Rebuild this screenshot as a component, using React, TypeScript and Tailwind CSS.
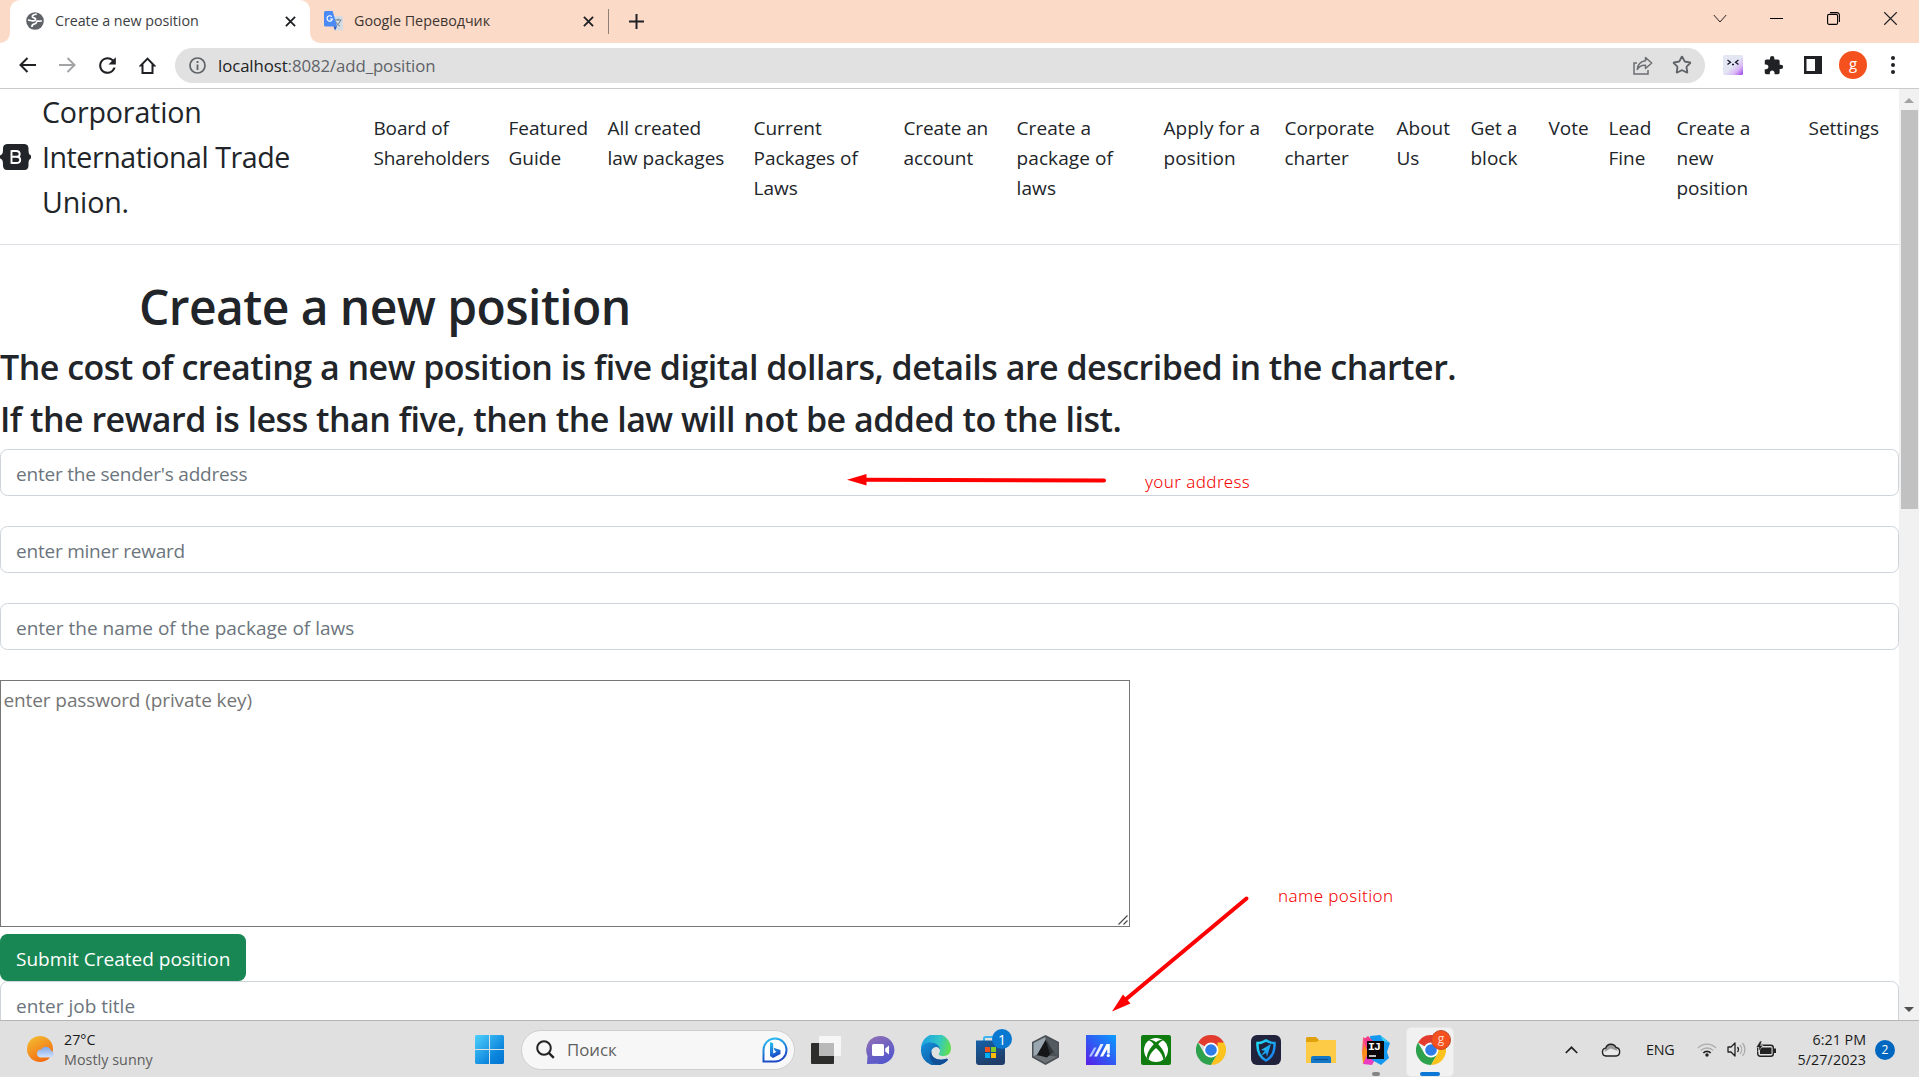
import React from "react";
import { Star } from "lucide-react";
import { MdExtension, MdRefresh } from "react-icons/md";

const NAV = [
  { w: "w-[135px] tracking-[-0.15px]", lines: ["Board of", "Shareholders"] },
  { w: "w-[99px]", lines: ["Featured", "Guide"] },
  { w: "w-[146px]", lines: ["All created", "law packages"] },
  { w: "w-[150px]", lines: ["Current", "Packages of", "Laws"] },
  { w: "w-[113px] tracking-[-0.1px]", lines: ["Create an", "account"] },
  { w: "w-[147px] tracking-[0.1px]", lines: ["Create a", "package of", "laws"] },
  { w: "w-[121px] tracking-[0.1px]", lines: ["Apply for a", "position"] },
  { w: "w-[112px]", lines: ["Corporate", "charter"] },
  { w: "w-[74px]", lines: ["About", "Us"] },
  { w: "w-[78px]", lines: ["Get a", "block"] },
  { w: "w-[60px]", lines: ["Vote"] },
  { w: "w-[68px]", lines: ["Lead", "Fine"] },
  { w: "w-[132px]", lines: ["Create a", "new", "position"] },
  { w: "w-[76px]", lines: ["Settings"] },
];

function Cross({ size = 12, sw = 2, color = "#202124" }: { size?: number; sw?: number; color?: string }) {
  return (
    <svg width={size} height={size} viewBox="0 0 12 12" stroke={color} strokeWidth={sw} fill="none">
      <path d="M1 1 11 11M11 1 1 11" />
    </svg>
  );
}

function TabStrip() {
  return (
    <div className="flex h-[43px] shrink-0 items-stretch bg-[#fcdac8] text-[14.3px] text-[#3c3530]">
      <div className="flex w-[10px] bg-white">
        <div className="w-full rounded-br-[10px] bg-[#fcdac8]" />
      </div>
      <div className="flex w-[300px] items-center rounded-t-[10px] bg-white pb-px pl-4 text-[#3c4043]">
        <svg width="18" height="18" viewBox="0 0 18 18">
          <circle cx="9" cy="9" r="8.8" fill="#5f6368" />
          <path d="M10.500 2.200C7.500 2 5.500 3.500 6 5c.6 1.600 3 .6 3.600 2 .6 1.300-1 1.700-2.200 1.900C5.500 9.200 4 8 1.800 8.200c-.3 3 1.500 5.600 4 6.800.2-1.500.2-2.500 1.700-3 1.500-.5 2.800-.4 2.900-1.700.1-1.500 1.500-1.400 2.800-1.200 1 .1 2-.1 2.700-.6-.2-2.800-2-5.400-5.400-6.300z" fill="#5f6368" />
          <path d="M10.800 2.300C8 2 6 3.400 6.300 4.800c.4 1.500 3 .8 3.300 2.200.3 1.500-1.500 1.700-2.500 1.800C5.300 9 4 8 2 8.200M5.900 15c0-1.800.6-2.600 2-2.900 1.500-.3 2.500-.6 2.600-1.900.2-1.400 1.500-1.200 2.700-1 1 .1 2-.1 2.600-.6" stroke="#fff" strokeWidth="1.700" fill="none" />
        </svg>
        <span className="ml-[11px] w-[225px] tracking-[-0.05px]">Create a new position</span>
        <span className="flex w-[20px] justify-center"><Cross size={11} /></span>
      </div>
      <div className="flex w-[298px] bg-white">
        <div className="flex w-full items-center rounded-bl-[10px] bg-[#fcdac8] pb-px pl-[14px]">
          <svg width="19" height="20" viewBox="0 0 19 20">
            <path d="M7 5h10.500A1.500 1.500 0 0 1 19 6.500V18a1.500 1.500 0 0 1-1.500 1.500H11z" fill="#d5dbe2" />
            <path d="M10.500 9h7M14 7.500V9m2.500 0c-.5 2.500-2.500 4.500-4.500 6m-.5-4.500c1 2 2.500 3.500 4.500 4.500" stroke="#6b7f92" strokeWidth="1" fill="none" />
            <path d="M1.500 0h7.200L13 15.500H1.500A1.500 1.500 0 0 1 0 14V1.500A1.500 1.500 0 0 1 1.500 0z" fill="#4a8af4" />
            <path d="M9.500 15.500H13l-2 4z" fill="#2b56c4" />
            <path d="M7.800 5.700A2.700 2.700 0 1 0 8.400 8H6" stroke="#fff" strokeWidth="1.200" fill="none" />
          </svg>
          <span className="ml-[11px] w-[224px]">Google Переводчик</span>
          <span className="flex w-[20px] justify-center"><Cross size={11} /></span>
        </div>
      </div>
      <div className="mt-[9px] h-[25px] w-px bg-[#8f7f76]" />
      <div className="flex w-[54px] items-center justify-center">
        <svg width="15" height="15" viewBox="0 0 15 15" stroke="#202124" strokeWidth="2"><path d="M7.500 0v15M0 7.500h15" /></svg>
      </div>
      <div className="mb-[6px] ml-auto flex items-center text-black">
        <span className="flex w-[57px] justify-center"><svg width="14" height="9" viewBox="0 0 14 9" fill="none" stroke="#222" strokeWidth="1"><path d="M.8 1 7 8l6.200-7" /></svg></span>
        <span className="flex w-[57px] justify-center"><span className="h-px w-[13px] bg-black" /></span>
        <span className="flex w-[57px] justify-center">
          <svg width="13" height="13" viewBox="0 0 13 13" fill="none" stroke="#000" strokeWidth="1.100"><rect x=".6" y="2.400" width="10" height="10" rx="1.500" /><path d="M3 .6h7A2.400 2.400 0 0 1 12.400 3v7" /></svg>
        </span>
        <span className="flex w-[57px] justify-center"><Cross size={15} sw={0.9} /></span>
      </div>
    </div>
  );
}

function Toolbar() {
  return (
    <div className="flex h-[46px] shrink-0 items-center border-b border-[#c9cacb] bg-white pb-px pl-[7px]">
      <span className="flex w-10 justify-center"><svg width="17" height="16" viewBox="0 0 17 16" fill="none" stroke="#202124" strokeWidth="2"><path d="M8.500 1 1.500 8l7 7M1.500 8H17" /></svg></span>
      <span className="flex w-10 justify-center"><svg width="17" height="16" viewBox="0 0 17 16" fill="none" stroke="#a3a4a6" strokeWidth="2"><path d="m8.500 1 7 7-7 7M15.500 8H0" /></svg></span>
      <span className="flex w-10 justify-center"><MdRefresh size={25} color="#202124" /></span>
      <span className="flex w-10 justify-center"><svg width="17" height="17" viewBox="0 0 17 17" fill="none" stroke="#202124" strokeWidth="2"><path d="M3.500 8.500H1.800L8.500 1.600l6.700 6.900h-1.700V16h-10z" /></svg></span>
      <div className="ml-[8px] flex h-[35px] w-[1530px] items-center rounded-full bg-[#e1e1e1] pr-[13px] pl-[14px]">
        <svg width="17" height="17" viewBox="0 0 17 17" fill="none" stroke="#5f6368"><circle cx="8.500" cy="8.500" r="7.500" strokeWidth="1.700" /><path d="M8.500 7.500V13M8.500 4v2" strokeWidth="1.800" /></svg>
        <span className="ml-[12px] pt-px text-[16.800px] tracking-[-0.08px] text-[#5f6368]"><span className="text-[#202124]">localhost</span>:8082/add_position</span>
        <svg className="ml-auto" width="20" height="19" viewBox="0 0 20 19" fill="none" stroke="#6b6e72" strokeWidth="1.500"><path d="M4 7H1v11h14v-4" /><path d="M12.500 1.500 18.700 7l-6.200 5.500V9.300C8.500 9 6 10.500 4.300 13.500c.4-4.500 3-8 8.200-8.700z" strokeLinejoin="round" /></svg>
        <span className="ml-[19px] flex"><Star size={20} strokeWidth={2.2} color="#5f6368" strokeLinejoin="miter" /></span>
      </div>
      <span className="ml-[8px] flex w-10 justify-center">
        <svg width="20" height="20" viewBox="0 0 20 20">
          <defs><linearGradient id="ext" x1="0" y1="0" x2="1" y2="1"><stop offset=".5" stopColor="#e3e7f3" /><stop offset=".75" stopColor="#d9b5f5" /><stop offset="1" stopColor="#9a3ef0" /></linearGradient></defs>
          <rect width="20" height="20" rx="1.500" fill="url(#ext)" />
          <path d="m4.500 5 3 2.300-3 2.300M15.500 5l-3 2.300 3 2.300M9 9.500h2" stroke="#1b1830" strokeWidth="1.300" fill="none" />
        </svg>
      </span>
      <span className="flex w-10 justify-center"><MdExtension size={21} color="#202124" /></span>
      <span className="flex w-10 justify-center"><svg width="18" height="18" viewBox="0 0 18 18"><path d="M0 0h18v18H0zM2.500 3v12H11V3z" fill="#202124" fillRule="evenodd" /></svg></span>
      <span className="flex w-10 justify-center"><span className="flex size-7 items-center justify-center rounded-full bg-[#f4511e] pb-[4px] text-[15px] text-white">g</span></span>
      <span className="flex w-10 justify-center"><svg width="4" height="18" viewBox="0 0 4 18" fill="#202124"><circle cx="2" cy="2" r="2" /><circle cx="2" cy="9" r="2" /><circle cx="2" cy="16" r="2" /></svg></span>
    </div>
  );
}

const FIELD =
  "block h-[47px] w-full shrink-0 rounded-[7.5px] border border-[#ced4da] bg-white px-[15px] pt-[2px] text-[19px] text-[#212529] outline-none placeholder:text-[#6c757d]";

function Page() {
  return (
    <div className="flex min-w-0 flex-1 flex-col overflow-hidden text-[#212529]">
      <header className="flex h-[156px] shrink-0 border-b border-[#dee2e6]">
        <div className="flex h-[135px] w-[373.5px] items-center">
          <svg className="mt-px" width="31" height="26" viewBox="0 0 31 26">
            <path d="M7 0h17.500c2.700 0 4 2.200 4 4.300 0 3.500 0 6.500 2.500 7.200v3c-2.500.7-2.500 3.700-2.500 7.200 0 2.100-1.300 4.300-4 4.300H7c-2.700 0-4-2.200-4-4.300 0-3.500 0-6.500-3-7.200v-3c3-.7 3-3.700 3-7.200C3 2.200 4.300 0 7 0z" fill="#212529" />
            <path d="M11.500 6.200v13.600M11.500 7h4.700c2.300 0 3.500 1.100 3.500 2.900s-1.300 2.900-3.500 2.900h-4.700m4.500 0c2.800 0 4.200 1.100 4.200 3.200S18.700 19 16 19h-4.500" stroke="#fff" strokeWidth="1.900" fill="none" />
          </svg>
          <div className="ml-[11px] text-[28.600px] leading-[45px]"><div className="tracking-[-0.15px]">Corporation</div><div className="tracking-[-0.45px]">International Trade</div><div className="tracking-[-0.15px]">Union.</div></div>
        </div>
        <nav className="flex pt-[24px] text-[19px] leading-[30px]">
          {NAV.map((n, i) => (
            <a key={i} className={n.w + " shrink-0 whitespace-nowrap"}>
              {n.lines.map((l) => <span key={l} className="block">{l}</span>)}
            </a>
          ))}
        </nav>
      </header>
      <h1 className="mt-[32px] h-[60px] shrink-0 pl-[139px] text-[48px] leading-[60px] font-semibold tracking-[-0.58px]">Create a new position</h1>
      <h2 className="mt-[9px] h-[42px] shrink-0 text-[34px] leading-[42px] font-semibold tracking-[-0.51px] whitespace-nowrap">The cost of creating a new position is five digital dollars, details are described in the charter.</h2>
      <h2 className="mt-[10px] h-[42px] shrink-0 text-[34px] leading-[42px] font-semibold tracking-[-0.51px] whitespace-nowrap">If the reward is less than five, then the law will not be added to the list.</h2>
      <div className="mt-[9px] flex flex-col gap-[30px]">
        <input className={FIELD + " tracking-[-0.2px]"} placeholder="enter the sender's address" />
        <input className={FIELD + " tracking-[-0.22px]"} placeholder="enter miner reward" />
        <input className={FIELD} placeholder="enter the name of the package of laws" />
        <div className="relative w-[1130px]">
          <textarea className="block h-[247px] w-full resize-none border border-[#767676] px-[2.500px] pt-[4px] text-[19px] leading-[30px] tracking-[-0.1px] outline-none placeholder:text-[#757575]" placeholder="enter password (private key)" />
          <svg className="absolute right-[2px] bottom-[2px]" width="10" height="10" viewBox="0 0 10 10" stroke="#4a4a4a" strokeWidth="1.200"><path d="M.5 9.500l9-9M5.500 9.500l4-4" /></svg>
        </div>
      </div>
      <button className="mt-[7px] h-[47px] w-[246px] shrink-0 rounded-[7.5px] bg-[#198754] pt-[3px] pl-[16px] text-left text-[19px] whitespace-nowrap text-white">Submit Created position</button>
      <input className={FIELD} placeholder="enter job title" />
    </div>
  );
}

function Scrollbar() {
  return (
    <div className="flex w-[20px] shrink-0 flex-col items-center bg-[#f1f1f1]">
      <svg className="mt-[9px]" width="10" height="5" viewBox="0 0 10 5"><path d="M5 0l5 5H0z" fill="#a3a3a3" /></svg>
      <div className="mt-[7px] h-[399px] w-[17px] bg-[#c1c1c1]" />
      <svg className="mt-auto mb-[8px]" width="10" height="5" viewBox="0 0 10 5"><path d="M5 5l5-5H0z" fill="#505050" /></svg>
    </div>
  );
}

function Annotations() {
  return (
    <div className="pointer-events-none absolute inset-0 text-[#f50000]">
      <svg width="1919" height="1077" viewBox="0 0 1919 1077" stroke="#ff0000" fill="#ff0000">
        <path d="M864 479.700 1104 480.500" strokeWidth="4" strokeLinecap="round" />
        <path d="M847 479.700 866.500 474v11.500z" stroke="none" />
        <path d="M1125 1000 1246.500 898.500" strokeWidth="4" strokeLinecap="round" />
        <path d="M1112 1011.500 1123 994.500 1130.500 1003.500z" stroke="none" />
      </svg>
      <span className="absolute top-[469px] left-[1145px] font-['Noto_Sans'] text-[17px] leading-[26px] font-light tracking-[0.4px] whitespace-nowrap">your address</span>
      <span className="absolute top-[883px] left-[1278px] font-['Noto_Sans'] text-[17px] leading-[26px] font-light tracking-[0.4px] whitespace-nowrap">name position</span>
    </div>
  );
}

function Chrome() {
  return (
    <svg width="30" height="30" viewBox="0 0 48 48">
      <path d="M24 24 3.200 12A24 24 0 0 1 44.800 12z" fill="#e33b2e" />
      <path d="M3.200 12 13.600 30 24 34.500 34.400 30 24 48A24 24 0 0 1 3.200 12z" fill="#2da14c" />
      <path d="M24 48 34.400 30V12h10.400A24 24 0 0 1 24 48z" fill="#fcc31e" />
      <circle cx="24" cy="24" r="12" fill="#fff" />
      <circle cx="24" cy="24" r="9.300" fill="#2f7de9" />
    </svg>
  );
}

function Slot({ children, className = "" }: { children: React.ReactNode; className?: string }) {
  return <span className={"relative flex h-full w-[55px] items-center justify-center pt-px " + className}>{children}</span>;
}

function Taskbar() {
  return (
    <div className="flex h-[57px] shrink-0 items-center border-t border-[#b5b5b5] bg-[#e0e0e0] pr-[24px] text-[#1b1b1b]">
      <div className="flex w-[448px] items-center pl-[27px]">
        <svg width="28" height="27" viewBox="0 0 28 27">
          <defs>
            <linearGradient id="sun" x1="0" y1="0" x2=".6" y2="1"><stop stopColor="#f3c233" /><stop offset="1" stopColor="#f36b12" /></linearGradient>
            <linearGradient id="cl" x1="0" y1="0" x2="0" y2="1"><stop stopColor="#7fa6e8" /><stop offset="1" stopColor="#d3e2fb" /></linearGradient>
          </defs>
          <circle cx="13" cy="13" r="13" fill="url(#sun)" />
          <path d="M14 21.500a4 4 0 0 1 0-8 5.500 5.500 0 0 1 10 1.200 3.500 3.500 0 0 1 0 6.800z" fill="url(#cl)" />
        </svg>
        <div className="ml-[9px] pt-px text-[14.300px] leading-[20px]"><div>27°C</div><div className="tracking-[0.05px] text-[#5d5d5d]">Mostly sunny</div></div>
      </div>
      <div className="ml-[27px] flex w-[46px] items-center pt-px">
        <svg width="29" height="29" viewBox="0 0 29 29">
          <defs><linearGradient id="win" x1="0" y1="0" x2="1" y2="1"><stop stopColor="#4fd0fc" /><stop offset=".7" stopColor="#0a84dc" /><stop offset="1" stopColor="#0573d0" /></linearGradient></defs>
          <path d="M1 0h13v14H0V1zM15 0h13l1 1v13H15zM0 15h14v14H1l-1-1zM15 15h14v13l-1 1H15z" fill="url(#win)" />
        </svg>
      </div>
      <div className="mt-px flex h-[40px] w-[274px] items-center rounded-full border border-[#cfcfcf] bg-[#f7f7f7] pr-[6px] pl-[14px]">
        <svg width="19" height="19" viewBox="0 0 19 19" fill="none" stroke="#222"><circle cx="8" cy="8" r="6.800" strokeWidth="2" /><path d="m12.800 12.800 5 5" strokeWidth="2.400" /></svg>
        <span className="ml-[12px] pt-px text-[16.800px] text-[#5f5f5f]">Поиск</span>
        <svg className="ml-auto" width="26" height="26" viewBox="0 0 26 26">
          <defs><linearGradient id="bing" x1="0" y1="0" x2=".3" y2="1"><stop stopColor="#27c5f3" /><stop offset="1" stopColor="#1b48c5" /></linearGradient></defs>
          <path d="M1.500 24.500V13A11.500 11.500 0 1 1 13 24.500z" fill="#fff" stroke="url(#bing)" strokeWidth="2" />
          <path d="M8 5l3.200 1.200v10.300l3.300-1.800-1.700-.9-1.200-3L18.500 13v4L11 21l-3-2z" fill="url(#bing)" />
        </svg>
      </div>
      <div className="ml-[3px] flex h-full items-center">
        <Slot>
          <svg width="30" height="28" viewBox="0 0 30 28"><rect y="7" width="23" height="21" rx="1" fill="#2d2d2b" /><rect x="8" width="22" height="20" rx="1" fill="#f6f6f6" /><rect x="8" y="7" width="15" height="13" fill="#b9b9b9" /></svg>
        </Slot>
        <Slot>
          <svg width="29" height="28" viewBox="0 0 29 28">
            <defs><linearGradient id="chat" x1="0" y1="0" x2=".5" y2="1"><stop stopColor="#9470b4" /><stop offset="1" stopColor="#5558cc" /></linearGradient></defs>
            <path d="M14.500 0a14 14 0 1 1-3 27.700L1 28l.5-8A14 14 0 0 1 14.500 0z" fill="url(#chat)" />
            <rect x="6" y="8" width="12" height="12" rx="1.500" fill="#fff" /><path d="m19.200 12.500 3.800-3v9l-3.800-3z" fill="#fff" />
          </svg>
        </Slot>
        <Slot>
          <svg width="30" height="30" viewBox="0 0 30 30">
            <defs>
              <linearGradient id="e1" x1="0" y1=".3" x2="1" y2=".5"><stop stopColor="#1aa0e5" /><stop offset=".6" stopColor="#33c7c4" /><stop offset="1" stopColor="#62e04e" /></linearGradient>
              <linearGradient id="e2" x1="0" y1="0" x2="1" y2="1"><stop stopColor="#1590dc" /><stop offset="1" stopColor="#0d4d95" /></linearGradient>
            </defs>
            <path d="M0 14A15 15 0 0 1 30 13.500c0 4.500-3 7.500-7.300 7.500-3.700 0-5.700-1.300-4.700-2.500 2-2.500 1-7.500-5-8.500C7 9 2 10 0 14z" fill="url(#e1)" />
            <path d="M0 14c1-4.500 5-6.500 9.500-6.500 5.500 0 9.500 3.500 9.500 7-2-4-7-3-8.500 1-1.500 6 5 11 14 8.500 1.500-.5 3 0 1.800 1.500A15 15 0 0 1 0 15z" fill="url(#e2)" />
            <path d="M10.500 15.500c-1.500 6 5 11 14 8.500 1.500-.5 3 0 1.800 1.500A15 15 0 0 1 17 29.800C10 29 6.500 21 10.500 15.500z" fill="#124f96" />
          </svg>
        </Slot>
        <Slot>
          <svg width="29" height="30" viewBox="0 0 29 30">
            <defs><linearGradient id="bag" x1="0" y1="0" x2=".4" y2="1"><stop stopColor="#1661a8" /><stop offset="1" stopColor="#1f3d68" /></linearGradient></defs>
            <path d="M8 6.500V3.500c0-1 .5-1.500 1.500-1.500h9c1 0 1.500.5 1.500 1.500v3" fill="none" stroke="#3cb6ee" strokeWidth="2" /><path d="M0 5.500h29V27a3 3 0 0 1-3 3H3a3 3 0 0 1-3-3z" fill="url(#bag)" /><path d="M9 12h5v5H9z" fill="#f1511b" /><path d="M15 12h5v5h-5z" fill="#80cc28" /><path d="M9 18h5v5H9z" fill="#00adef" /><path d="M15 18h5v5h-5z" fill="#fbbc09" /></svg>
          <span className="absolute top-[8px] left-[29px] flex size-[20px] items-center justify-center rounded-full bg-[#0878d0] text-[14px] text-white">1</span>
        </Slot>
        <Slot>
          <svg width="27" height="30" viewBox="0 0 27 30"><path d="M13.500 0 27 7v15.500L13.500 30 0 22.500V7z" fill="#4b5156" /><path d="M1.500 8 13.500 2v13L1.500 21.500z" fill="#9aa7b0" /><path d="M13.500 2 25.500 8v13L19 12z" fill="#545b61" /><path d="M1.500 21.500 8 20l17 1.500-11.500 6.500z" fill="#6c7276" /><path d="M13.500 5 5 20l10 2.500 5.500-5.500z" fill="#141618" /><path d="M14 5.500 21.500 17l-3.500 2.500z" fill="#31363a" /></svg>
        </Slot>
        <Slot>
          <svg width="30" height="30" viewBox="0 0 30 30">
            <defs><linearGradient id="asus" x1="1" y1="0" x2="0" y2="1"><stop stopColor="#0a9dff" /><stop offset=".5" stopColor="#2f5cf3" /><stop offset="1" stopColor="#5b1ee8" /></linearGradient></defs>
            <path d="M0 0h30v30H0z" fill="url(#asus)" /><path d="M3 21.500 8 12.500h2.600L5.600 21.500z" fill="#a9c0ff" /><path d="M8 21.500 14.500 9h3L11 21.500z" fill="#e6eeff" /><path d="M14 21.500 20.500 9h3.300v9.500h-2.600v-4.500l-4.200 7.500z" fill="#fff" /><circle cx="22.300" cy="20.500" r="1.600" fill="#fff" />
          </svg>
        </Slot>
        <Slot>
          <svg width="30" height="30" viewBox="0 0 30 30"><rect width="30" height="30" rx="2" fill="#107c10" /><circle cx="15" cy="15" r="12" fill="#fff" /><path d="M7 5c3-.8 6 .6 8 2.200 2-1.600 5-3 8-2.200-2.600.5-4.500 2.500-5.700 4.200 4.200 4.300 7.200 9.800 6.700 13.800l-2 1.500c.5-3.500-3.500-8.500-7-11.500-3.500 3-7.500 8-7 11.500L6 23c-.5-4 2.500-9.500 6.700-13.800C11.500 7.500 9.600 5.500 7 5z" fill="#107c10" /></svg>
        </Slot>
        <Slot><Chrome /></Slot>
        <Slot>
          <svg width="30" height="30" viewBox="0 0 30 30">
            <defs><linearGradient id="sh" x1="0" y1="0" x2="1" y2="1"><stop stopColor="#21e1f5" /><stop offset="1" stopColor="#1673f0" /></linearGradient></defs>
            <rect width="30" height="30" rx="6" fill="#20233b" /><path d="M6.500 8c3.500.3 6-1.500 8.500-2.500C17.500 6.500 20 8.300 23.500 8c.5 9-2.500 14.500-8.500 17.500C9 22.500 6 17 6.500 8z" fill="none" stroke="url(#sh)" strokeWidth="2.500" /><path d="m20 9-10 6 4 .8L9.500 21l5.500-3 1 4z" fill="url(#sh)" />
          </svg>
        </Slot>
        <Slot>
          <svg width="30" height="26" viewBox="0 0 30 26"><path d="M0 1.500A1.500 1.500 0 0 1 1.500 0H10l3 3h15.500A1.500 1.500 0 0 1 30 4.500V10H0z" fill="#e0a10b" /><path d="M0 5h11l2-2h15.500A1.500 1.500 0 0 1 30 4.500V26H0z" fill="#fdcb45" /><path d="M5 26v-5a2 2 0 0 1 2-2h16a2 2 0 0 1 2 2v5z" fill="#1478c8" /><path d="M8 22.500h14" stroke="#0b4f8c" strokeWidth="1.200" /></svg>
        </Slot>
        <Slot>
          <svg width="28" height="30" viewBox="0 0 28 30">
            <path d="M1 2 9 7 6 15 0 17z" fill="#fe5a76" /><path d="M0 17 3 9l4 13-6 7z" fill="#fd8a1c" /><path d="m1 29 4-9 9 3-4 7z" fill="#e83cc2" /><path d="M8 1 18 0 28 8l-3 9 2 6-8 7-9-5z" fill="#1497ee" /><path d="m18 0 3 6 6 2z" fill="#39d2f5" /><path d="m2 4 4-3 5 5-7 8z" fill="#f23a8c" />
            <path d="M5 6h17v18H5z" fill="#0b0507" /><path d="M7 21h7" stroke="#fff" strokeWidth="1.500" />
          </svg>
          <span className="absolute top-[20px] left-[20px] font-['Liberation_Mono'] text-[11.500px] leading-[12px] font-bold tracking-[-1px] text-white">IJ</span>
          <span className="absolute bottom-[1px] left-[24px] h-[4px] w-[8px] rounded-full bg-[#858585]" />
        </Slot>
        <Slot>
          <span className="absolute top-[6px] left-[3px] h-[50px] w-[48px] rounded-[5px] border border-[#e8e8e8] bg-[#f1f1f1]" />
          <span className="relative"><Chrome /></span>
          <span className="absolute top-[9px] left-[28px] flex size-[20px] items-center justify-center rounded-full border border-[#c0482a] bg-[#f4511e] pb-[3px] text-[12px] text-[#ffd9cc]">g</span>
          <span className="absolute bottom-[1px] left-[17px] h-[4px] w-[20px] rounded-full bg-[#0a78d4]" />
        </Slot>
      </div>
      <div className="ml-auto flex items-center pt-px">
        <svg width="13" height="8" viewBox="0 0 13 8" fill="none" stroke="#222" strokeWidth="1.700"><path d="m.8 7 5.700-5.700L12.200 7" /></svg>
        <svg className="ml-[23px]" width="20" height="15" viewBox="0 0 20 15"><path d="M5 14a4 4 0 0 1-.3-7.900A5.500 5.500 0 0 1 15 5.500 4.300 4.300 0 0 1 15 14z" fill="#e9e9e9" /><path d="M4.500 6.500a5.300 5.300 0 0 1 10-1c.8 1 1.500 1.800 2.500 3.500L9.500 6.500 3.500 10z" fill="#9a9a9a" /><path d="M5 14a4 4 0 0 1-.3-7.900A5.500 5.500 0 0 1 15 5.500 4.300 4.300 0 0 1 15 14z" fill="none" stroke="#222" strokeWidth="1.400" /></svg>
        <span className="ml-[25px] w-[29px] text-[14.300px] tracking-[-0.2px]">ENG</span>
        <svg className="ml-[22px]" width="20" height="15" viewBox="0 0 20 15" fill="none"><path d="M1 6a12.500 12.500 0 0 1 18 0M3.800 8.500a9 9 0 0 1 12.400 0" stroke="#ababab" strokeWidth="1.300" /><path d="M6.300 11a5.200 5.200 0 0 1 7.400 0" stroke="#222" strokeWidth="1.700" /><circle cx="10" cy="13" r="1.700" fill="#222" /></svg>
        <svg className="ml-[10px]" width="20" height="17" viewBox="0 0 20 17" fill="none" stroke="#222" strokeWidth="1.300"><path d="M1 6h3l4-4v13l-4-4H1z" strokeLinejoin="round" /><path d="M10.500 6a4 4 0 0 1 0 5" /><path d="M13 4a7 7 0 0 1 0 9M15.500 2a10 10 0 0 1 0 13" stroke="#ababab" /></svg>
        <svg className="ml-[9px]" width="21" height="17" viewBox="0 0 21 17"><rect x="1.700" y="4.200" width="15.600" height="11" rx="2.500" fill="none" stroke="#222" strokeWidth="1.400" /><path d="M4 6.500h11.500v6.500H4zM18 7.500h2v4.500h-2z" fill="#222" /><path d="M4 0 0 6.500h3L2 11l5-6.500H4.500L6 0z" fill="#222" stroke="#e0e0e0" strokeWidth=".6" /></svg>
        <div className="ml-[14px] w-[75px] text-right text-[14.300px] leading-[20px] whitespace-nowrap"><div>6:21 PM</div><div className="tracking-[0.1px]">5/27/2023</div></div>
        <span className="ml-[9px] flex size-[20px] items-center justify-center rounded-full bg-[#0067c0] text-[12px] text-white">2</span>
      </div>
    </div>
  );
}

export default function App() {
  return (
    <div className="relative flex h-[1077px] w-[1919px] flex-col overflow-hidden bg-white font-['Open_Sans','Noto_Sans',sans-serif]">
      <TabStrip />
      <Toolbar />
      <div className="flex min-h-0 flex-1">
        <Page />
        <Scrollbar />
      </div>
      <Taskbar />
      <Annotations />
    </div>
  );
}
